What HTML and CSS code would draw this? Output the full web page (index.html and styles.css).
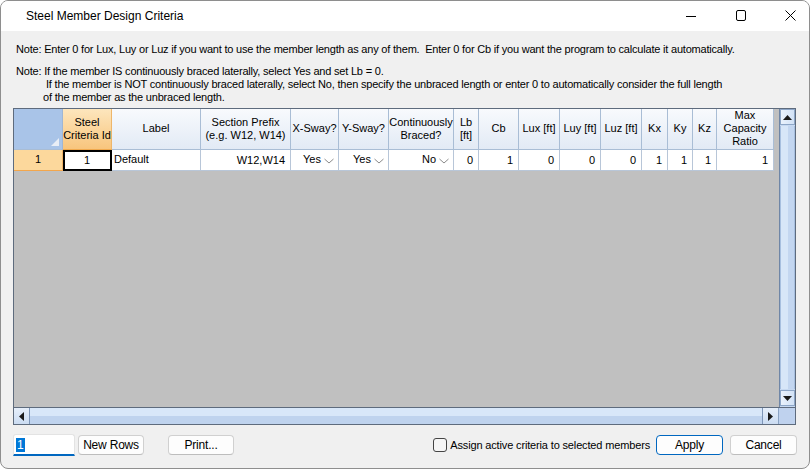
FILE: index.html
```html
<!DOCTYPE html>
<html>
<head>
<meta charset="utf-8">
<link rel="stylesheet" href="styles.css">
</head>
<body>
<div class="win">
  <div class="titlebar">
    <span class="title">Steel Member Design Criteria</span>
    <div class="caps">
      <svg class="cap" width="46" height="30" viewBox="0 0 46 30"><line x1="23" y1="15.5" x2="33" y2="15.5" stroke="#000" stroke-width="1"/></svg>
      <svg class="cap" width="46" height="30" viewBox="0 0 46 30"><rect x="23.5" y="9.5" width="9" height="10" rx="1.5" fill="none" stroke="#000" stroke-width="1"/></svg>
      <svg class="cap" width="46" height="30" viewBox="0 0 46 30"><path d="M22.5 9.5 L32.5 19.5 M32.5 9.5 L22.5 19.5" stroke="#000" stroke-width="1"/></svg>
    </div>
  </div>
  <div class="content">
    <div class="note n1">Note: Enter 0 for Lux, Luy or Luz if you want to use the member length as any of them.&nbsp; Enter 0 for Cb if you want the program to calculate it automatically.</div>
    <div class="note">Note: If the member IS continuously braced laterally, select Yes and set Lb = 0.</div>
    <div class="note ind1">If the member is NOT continuously braced laterally, select No, then specify the unbraced length or enter 0 to automatically consider the full length</div>
    <div class="note ind2">of the member as the unbraced length.</div>

    <div class="grid">
      <div class="grid-top">
        <div class="cells">
          <div class="row hdr">
            <div class="c corner-cell"><span class="tri"></span></div>
            <div class="c sel">Steel<br>Criteria Id</div>
            <div class="c">Label</div>
            <div class="c">Section Prefix<br>(e.g. W12, W14)</div>
            <div class="c">X-Sway?</div>
            <div class="c">Y-Sway?</div>
            <div class="c">Continuously<br>Braced?</div>
            <div class="c">Lb<br>[ft]</div>
            <div class="c">Cb</div>
            <div class="c">Lux [ft]</div>
            <div class="c">Luy [ft]</div>
            <div class="c">Luz [ft]</div>
            <div class="c">Kx</div>
            <div class="c">Ky</div>
            <div class="c">Kz</div>
            <div class="c">Max<br>Capacity<br>Ratio</div>
          </div>
          <div class="row data">
            <div class="c rh">1</div>
            <div class="c active">1</div>
            <div class="c left">Default</div>
            <div class="c num">W12,W14</div>
            <div class="c dd"><span>Yes</span><svg width="12" height="6" viewBox="0 0 12 6"><polyline points="1.5,1 6,5 10.5,1" fill="none" stroke="#8a8a8a" stroke-width="1"/></svg></div>
            <div class="c dd"><span>Yes</span><svg width="12" height="6" viewBox="0 0 12 6"><polyline points="1.5,1 6,5 10.5,1" fill="none" stroke="#8a8a8a" stroke-width="1"/></svg></div>
            <div class="c dd"><span>No</span><svg width="12" height="6" viewBox="0 0 12 6"><polyline points="1.5,1 6,5 10.5,1" fill="none" stroke="#8a8a8a" stroke-width="1"/></svg></div>
            <div class="c num">0</div>
            <div class="c num">1</div>
            <div class="c num">0</div>
            <div class="c num">0</div>
            <div class="c num">0</div>
            <div class="c num">1</div>
            <div class="c num">1</div>
            <div class="c num">1</div>
            <div class="c num">1</div>
          </div>
        </div>
        <div class="vscroll">
          <div class="sbtn"><svg width="9" height="5" viewBox="0 0 9 5"><polygon points="0,5 9,5 4.5,0" fill="#1a1a1a"/></svg></div>
          <div class="vthumb"></div>
          <div class="sbtn"><svg width="9" height="5" viewBox="0 0 9 5"><polygon points="0,0 9,0 4.5,5" fill="#1a1a1a"/></svg></div>
        </div>
      </div>
      <div class="grid-bottom">
        <div class="hscroll">
          <div class="hbtn lb"><svg width="5" height="9" viewBox="0 0 5 9"><polygon points="5,0 5,9 0,4.5" fill="#1a1a1a"/></svg></div>
          <div class="hthumb"></div>
          <div class="hbtn rb"><svg width="5" height="9" viewBox="0 0 5 9"><polygon points="0,0 0,9 5,4.5" fill="#1a1a1a"/></svg></div>
        </div>
        <div class="sb-corner"></div>
      </div>
    </div>

    <div class="footer">
      <div class="textbox"><span class="selected">1</span></div>
      <button class="btn newrows">New Rows</button>
      <button class="btn print">Print...</button>
      <div class="spacer"></div>
      <label class="check"><span class="box"></span>Assign active criteria to selected members</label>
      <button class="btn apply">Apply</button>
      <button class="btn cancel">Cancel</button>
    </div>
  </div>
</div>
</body>
</html>
```

FILE: styles.css
```css
html, body {
  margin: 0;
  padding: 0;
  background: #ffffff;
}
.win {
  box-sizing: border-box;
  width: 810px;
  height: 469px;
  border: 1px solid #8e8e8e;
  border-radius: 8px;
  background: #f0f0f0;
  overflow: hidden;
  font-family: "Liberation Sans", Arial, sans-serif;
  color: #000;
}
.titlebar {
  height: 30px;
  background: #ffffff;
  display: flex;
  align-items: center;
}
.title {
  margin-left: 25px;
  font-size: 12px;
  flex: 1;
  padding-bottom: 1px;
}
.caps {
  display: flex;
  align-items: center;
}
.cap {
  display: block;
  margin-left: 4px;
}
.content {
  padding: 12px 0 0 12px;
}
.note {
  font-size: 11px;
  line-height: 13px;
  margin-left: 3px;
  white-space: nowrap;
  letter-spacing: -0.2px;
}
.n1 {
  margin-bottom: 9px;
}
.ind1 { margin-left: 33px; }
.ind2 { margin-left: 30px; }

.grid {
  margin-top: 4px;
  width: 783px;
  height: 317px;
  box-sizing: border-box;
  border: 1px solid #5e6b7d;
  display: flex;
  flex-direction: column;
}
.grid-top {
  display: flex;
  flex: 1;
  min-height: 0;
}
.cells {
  flex: 1;
  background: #c0c0c0;
}
.row {
  display: grid;
  grid-template-columns: 49px 49px 89px 90px 48px 50px 65px 25px 40px 41px 41px 41px 26px 25px 24px 57px;
}
.c {
  box-sizing: border-box;
  border-right: 1px solid #a9bdd5;
  border-bottom: 1px solid #a9bdd5;
  font-size: 11px;
  line-height: 13px;
  display: flex;
  align-items: center;
  justify-content: center;
  text-align: center;
  white-space: nowrap;
}
.hdr .c {
  height: 41px;
  background: linear-gradient(#f8fafd, #e2eaf5);
  padding-bottom: 1px;
}
.hdr .corner-cell {
  background: #a9c4e8;
  position: relative;
  border-right-color: #9fb6d4;
}
.tri {
  position: absolute;
  right: 3px;
  bottom: 3px;
  width: 0;
  height: 0;
  border-left: 8px solid transparent;
  border-bottom: 8px solid #e9eef6;
}
.hdr .sel {
  background: linear-gradient(#fde6bd, #f8c57d);
  border-right-color: #eeb66a;
  border-bottom-color: #f0a94e;
}
.data .c {
  height: 21px;
  background: #ffffff;
  border-right-color: #b8c6d8;
  border-bottom-color: #b8c6d8;
}
.data .rh {
  background: #fcd89c;
  border-right-color: #f0b468;
  border-bottom-color: #f3a64c;
  padding-bottom: 1px;
}
.data .active {
  border: 2px solid #000;
  border-left-width: 1px;
  border-top-width: 1px;
  box-shadow: inset 1px 1px 0 #000;
}
.data .left {
  justify-content: flex-start;
  align-items: flex-start;
  padding: 3px 0 0 2px;
}
.data .num {
  justify-content: flex-end;
  padding-right: 5px;
  padding-top: 1px;
}
.data .dd {
  justify-content: flex-end;
  padding-right: 3px;
}
.data .dd span {
  margin-right: 2px;
  padding-bottom: 2px;
}
.data .dd svg {
  display: block;
  margin-top: 1px;
}

.vscroll {
  width: 16px;
  box-sizing: border-box;
  border-left: 1px solid #6f86a6;
  display: flex;
  flex-direction: column;
  background: #c7d9f1;
}
.sbtn {
  height: 16px;
  box-sizing: border-box;
  background: linear-gradient(90deg, #eaf2fc, #d2e2f6);
  border: 1px solid #8da6c7;
  display: flex;
  align-items: center;
  justify-content: center;
}
.vthumb {
  flex: 1;
  margin: 1px 0;
  background: linear-gradient(90deg, #d7e6f8 0%, #d7e6f8 50%, #c3d6f0 50%, #c3d6f0 100%);
  border-left: 1px solid #a7bfdf;
  border-right: 1px solid #a7bfdf;
}
.vscroll .sbtn:last-child {
  margin-bottom: 1px;
}

.grid-bottom {
  display: flex;
  border-top: 1px solid #5e6b7d;
  box-sizing: border-box;
  height: 17px;
}
.hscroll {
  flex: 1;
  display: flex;
  background: linear-gradient(#d8e7f9 0%, #d8e7f9 50%, #bfd3ee 50%, #bfd3ee 100%);
}
.hbtn {
  width: 16px;
  box-sizing: border-box;
  display: flex;
  align-items: center;
  justify-content: center;
  background: linear-gradient(#e6effb, #cbdcf2);
}
.hbtn.lb { border-right: 1px solid #7e96b8; }
.hbtn.rb { border-left: 1px solid #7e96b8; }
.hthumb {
  flex: 1;
}
.sb-corner {
  width: 16px;
  background: #bfd2ee;
  border-left: 1px solid #8aa3c4;
}

.footer {
  display: flex;
  align-items: center;
  margin-top: 9px;
  width: 784px;
  height: 22px;
}
.textbox {
  box-sizing: border-box;
  width: 62px;
  height: 22px;
  background: #ffffff;
  border: 1px solid #e3e3e3;
  border-bottom: 2px solid #0067c0;
  border-radius: 3px 3px 0 0;
  padding: 3px 0 0 2px;
  font-size: 12px;
  line-height: 14px;
}
.selected {
  background: #0078d7;
  color: #fff;
  padding: 0 1px;
}
.btn {
  box-sizing: border-box;
  height: 20px;
  background: #fdfdfd;
  border: 1px solid #d0d0d0;
  border-bottom-color: #bdbdbd;
  border-radius: 4px;
  font-family: "Liberation Sans", Arial, sans-serif;
  font-size: 12px;
  letter-spacing: -0.2px;
  color: #000;
  padding: 0;
  margin: 0;
}
.newrows { width: 66px; margin-left: 3px; }
.print { width: 66px; margin-left: 24px; }
.spacer { flex: 1; }
.check {
  display: flex;
  align-items: center;
  font-size: 11px;
  letter-spacing: -0.15px;
  margin-right: 6px;
}
.box {
  box-sizing: border-box;
  width: 14px;
  height: 14px;
  border: 1px solid #444;
  border-radius: 3px;
  background: #f6f6f6;
  margin-right: 3px;
}
.apply {
  width: 67px;
  border: 1px solid #0067c0;
}
.cancel {
  width: 67px;
  margin-left: 7px;
}
```
